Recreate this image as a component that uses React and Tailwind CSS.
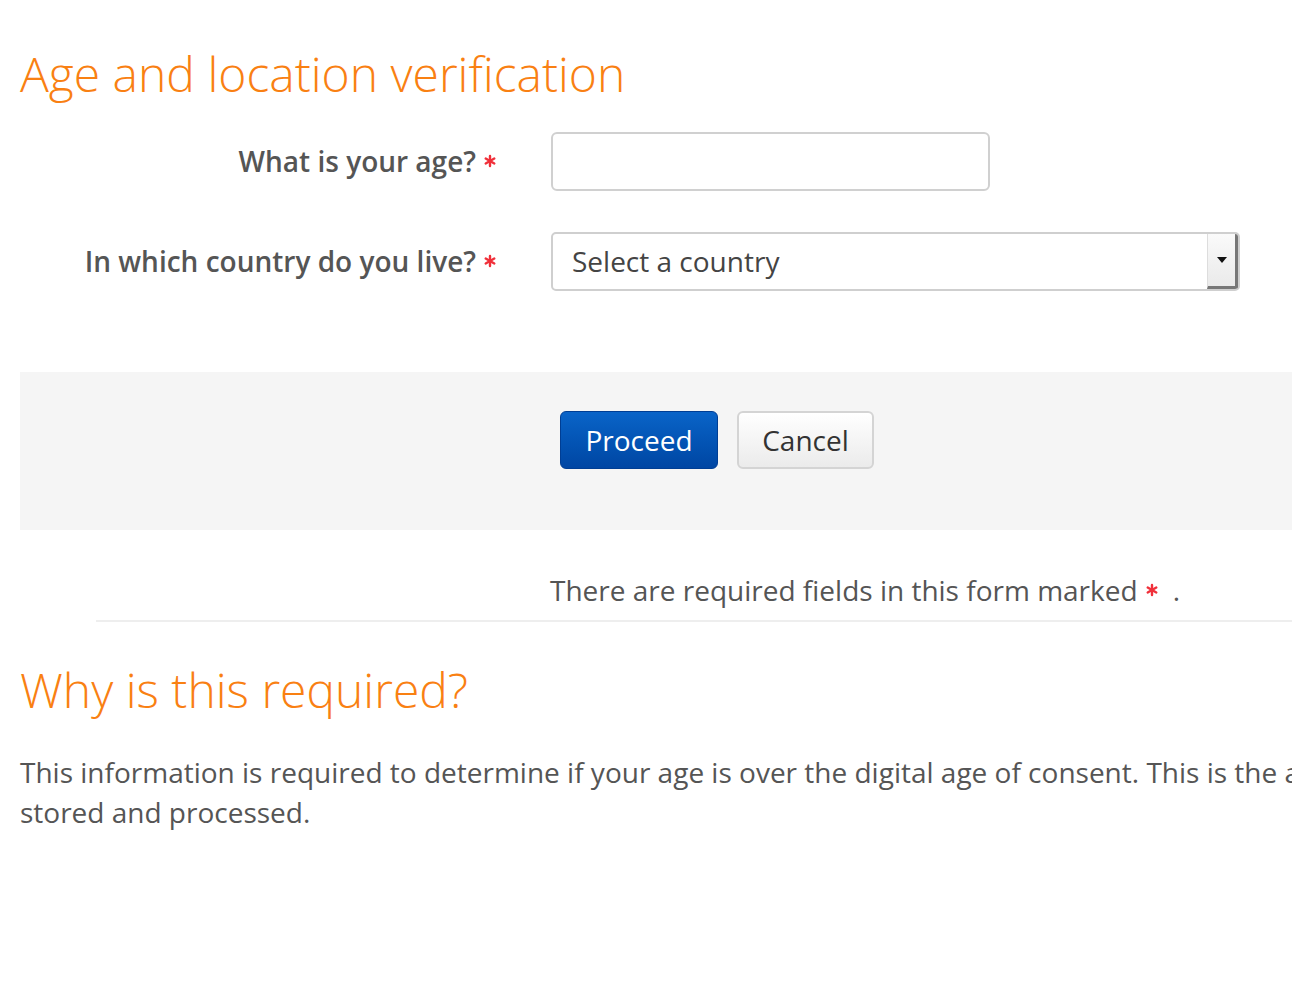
import React from 'react';

const Req = () => (
  <svg width="14" height="14" viewBox="0 0 14 14" className="inline-block ml-[7px]">
    <g stroke="#f0303a" strokeWidth="2.4" strokeLinecap="round">
      <line x1="7" y1="2" x2="7" y2="12" />
      <line x1="2.7" y1="4.5" x2="11.3" y2="9.5" />
      <line x1="2.7" y1="9.5" x2="11.3" y2="4.5" />
    </g>
  </svg>
);

const App = () => {
  return (
    <div className="w-[1292px] h-[992px] overflow-hidden bg-white text-[#555] font-['Open_Sans',sans-serif]">
      <div className="pl-5 pt-[42px]">
        <h2 className="text-[48px] font-light leading-[64px] text-[#f98012]">
          Age and location verification
        </h2>

        <div className="mt-[26px] flex items-center h-[58px]">
          <label className="w-[531px] pr-[54px] text-right text-[28px] font-semibold text-[#555] flex items-center justify-end">
            What is your age?<Req />
          </label>
          <input type="text" className="w-[439px] h-[59px] rounded-[6px] border-2 border-[#d0d0d0] outline-none px-4 text-[28px]" />
        </div>

        <div className="mt-[42px] flex items-center h-[58px]">
          <label className="w-[531px] pr-[54px] text-right text-[28px] font-semibold text-[#555] flex items-center justify-end">
            In which country do you live?<Req />
          </label>
          <div className="w-[689px] h-[59px] rounded-[5px] border-2 border-[#cfcfcf] flex items-stretch bg-white">
            <span className="flex-1 pl-[19px] flex items-center text-[28px] text-[#444]">Select a country</span>
            <div className="w-[31px] bg-gradient-to-b from-[#fafafa] to-[#eaeaea] border-l border-[#ddd] border-r-[3px] border-r-[#777] border-b-[3px] border-b-[#777] rounded-r-[3px] flex items-center justify-center">
              <svg width="10" height="6" viewBox="0 0 10 6"><path d="M0 0h10L5 6z" fill="#111" /></svg>
            </div>
          </div>
        </div>

        <div className="mt-[82px] h-[158px] bg-[#f5f5f5] pt-[39px]">
          <div className="ml-[540px] flex gap-[19px]">
            <button className="w-[158px] h-[58px] rounded-[6px] border border-[#003e94] bg-gradient-to-b from-[#0a64c8] to-[#0046a3] text-white text-[28px]">
              Proceed
            </button>
            <button className="w-[137px] h-[58px] rounded-[6px] border-2 border-[#d4d4d4] bg-gradient-to-b from-white to-[#ebebeb] text-[#333] text-[28px]">
              Cancel
            </button>
          </div>
        </div>

        <div className="mt-[40px] ml-[76px] border-b-2 border-[#eeeeee] pb-[10px]">
          <p className="ml-[454px] text-[28px] leading-[40px] text-[#555] flex items-center">
            There are required fields in this form marked<Req /><span className="ml-[14px]">.</span>
          </p>
        </div>

        <h2 className="mt-[36px] text-[48px] font-light leading-[64px] text-[#f98012]">
          Why is this required?
        </h2>

        <div className="mt-[30px] text-[28px] leading-[40px] text-[#555] whitespace-nowrap">
          <p>This information is required to determine if your age is over the digital age of consent. This is the age when an individual can consent to terms and conditions and their data being legally</p>
          <p>stored and processed.</p>
        </div>
      </div>
    </div>
  );
};

export default App;
